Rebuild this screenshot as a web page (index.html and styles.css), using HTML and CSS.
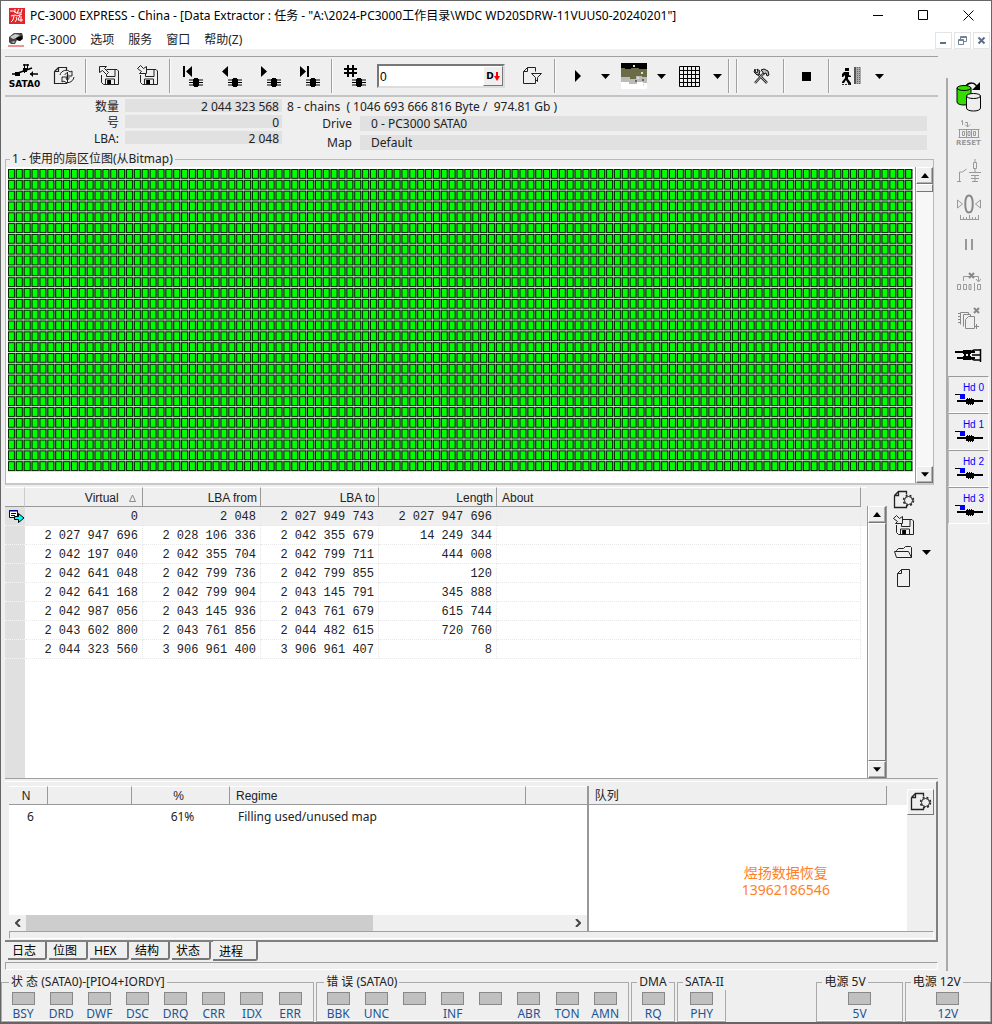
FILE: index.html
```html
<!DOCTYPE html>
<html lang="zh-CN">
<head>
    <meta charset="UTF-8">
    <meta name="viewport" content="width=device-width, initial-scale=1.0">
    <title>PC-3000 EXPRESS</title>
    <link rel="stylesheet" href="styles.css">
</head>
<body>
    <!-- shared icons -->
    <svg class="defs" width="0" height="0" aria-hidden="true">
        <symbol id="down" viewBox="0 0 9 5"><path d="M0 0h9L4.500 5z"/></symbol>
        <symbol id="up" viewBox="0 0 8 5"><path d="M0 5h8L4 0z"/></symbol>
        <symbol id="chip" viewBox="0 0 14 9">
            <path d="M0 2h14M0 4.500h14M0 7h14" stroke="#000" stroke-width="1"/>
            <path d="M4 1h6v7H4z"/><path d="M5 0h4v9H5z"/>
        </symbol>
        <symbol id="disk" viewBox="0 0 22 22">
            <path d="M8.500 4.500h10.500l1.500 1.500v13.500H5.500l-2-2V10M8.500 5v6.500h8.500V5M7.500 19v-5h9v5M9.500 15v4" fill="none" stroke="#222"/>
            <path d="M10 15h3v4h-3z"/>
        </symbol>
        <symbol id="saveout" viewBox="0 0 22 22">
            <use href="#disk"/>
            <path d="M1.500 1.500h7L6.500 3.500l4 4-2 2-4-4-3 2z" fill="#eee" stroke="#222"/>
        </symbol>
        <symbol id="savein" viewBox="0 0 22 22">
            <use href="#disk"/>
            <path d="M.500 3.500l3-3 3 3 3-2v7h-7l2-2-4-3z" fill="#eee" stroke="#222"/>
        </symbol>
        <symbol id="newpage" viewBox="0 0 22 20">
            <path d="M1.500 5.500l4-4h8v3M1.500 5.500h4v-4M1.500 5.500v12h12v-2" fill="none" stroke="#222" stroke-width="1.300"/>
            <circle cx="15.500" cy="10.500" r="4" fill="#eee" stroke="#222"/>
            <circle cx="15.500" cy="10.500" r="5" fill="none" stroke="#222" stroke-width="1.500" stroke-dasharray="2 2"/>
        </symbol>
        <symbol id="head" viewBox="0 0 28 14">
            <path d="M0 1.500h5" fill="none" stroke="#000"/>
            <path d="M5 1h5v5H5z" fill="#00f"/>
            <path d="M2 8h26" stroke="#000" stroke-width="2"/>
            <path d="M11 6h1V5h1v1h1V5h1v1h1V5h1v1h2v5h-1v1h-1v-1h-1v1h-1v-1h-1v1h-1v-1h-2z"/>
        </symbol>
    </svg>

    <div class="window">
        <header class="titlebar">
            <svg class="app-logo" viewBox="0 0 16 16">
                <path d="M0 0h16v16H0z" fill="#e1252b"/>
                <path d="M1 3h4l2 2h2M6 1v4M10 1l-2 4h4l1-4M2 8l4-1 2 1 5-2M5 8l-1 4-2 2M7 9l1 2-2 3M11 7l-2 5h5M12 8v6" fill="none" stroke="#fff"/>
            </svg>
            <h1>PC-3000 EXPRESS - China - [Data Extractor : 任务 - "A:\2024-PC3000工作目录\WDC WD20SDRW-11VUUS0-20240201"]</h1>
            <div class="window-buttons">
                <button aria-label="Minimize"><svg width="11" height="11" viewBox="0 0 11 11"><path d="M0 5.500h10" stroke="#000"/></svg></button>
                <button aria-label="Maximize"><svg width="11" height="11" viewBox="0 0 11 11"><path d="M.5.500h9v9h-9z" fill="none" stroke="#000"/></svg></button>
                <button aria-label="Close"><svg width="11" height="11" viewBox="0 0 11 11"><path d="M.5.500l10 10M10.500.500l-10 10" stroke="#000"/></svg></button>
            </div>
        </header>

        <nav class="menubar">
            <svg class="menu-logo" viewBox="0 0 16 14">
                <path d="M1 4l5-4h8l1 3v3l-3 2-3-1-2 4H3L1 9z" fill="#444"/>
                <path d="M2 4l5-3 5 1-4 3-3 1zM3 9l4-1-1 2z" fill="#ccc"/>
                <path d="M8 5l6-2v3l-2 2-3-1z" fill="#000"/>
                <path d="M0 13h16" stroke="#e1252b" stroke-width="1"/>
            </svg>
            <a href="#">PC-3000</a>
            <a href="#">选项</a>
            <a href="#">服务</a>
            <a href="#">窗口</a>
            <a href="#">帮助(Z)</a>
            <div class="mdi-buttons">
                <button aria-label="Minimize task"><svg width="9" height="9" viewBox="0 0 9 9"><path d="M1 7h6" stroke="#5b7085" stroke-width="2"/></svg></button>
                <button aria-label="Restore task"><svg width="9" height="9" viewBox="0 0 9 9"><path d="M2.500 3V.5h6v5H6M2.500 1.500h6M.5 3.500h5v5h-5zM.5 4.500h5" fill="none" stroke="#6f8296"/></svg></button>
                <button aria-label="Close task"><svg width="9" height="9" viewBox="0 0 9 9"><path d="M1.500 1.500l6 6M7.500 1.500l-6 6" stroke="#5b7085" stroke-width="2"/></svg></button>
            </div>
        </nav>

        <div class="work">
            <main class="main">
                <div class="toolbar">
                    <button aria-label="SATA0" class="port">
                        <svg width="26" height="13" viewBox="0 0 26 13"><path d="M0 10h7M18 10h8M6 9L20 4M11 1h6" stroke="#000" stroke-width="1.600" fill="none"/><path d="M12.500 0v9M15.500 0v6" stroke="#000"/><path d="M3 8h5v4H3zM18 10l3-3v6zM11 4h4v4h-4z"/></svg>
                        <span>SATA0</span>
                    </button>
                    <button aria-label="Refresh">
                        <svg width="22" height="20" viewBox="0 0 22 20"><path d="M1.500 5.500l4-4h8v3M1.500 5.500h4v-4M1.500 5.500v12h12v-1" fill="none" stroke="#222" stroke-width="1.200"/><path d="M7 9c1-5 8-6 10-3l2-1v5h-5l1-2c-2-2-3 0-3 1M21 11c-1 6-8 7-10 4l-2 1v-5h5l-1 2c2 2 3 0 3-2M14.500 6v11" fill="none" stroke="#222"/></svg>
                    </button>
                    <span class="sep"></span>
                    <button aria-label="Save"><svg width="22" height="22"><use href="#saveout"/></svg></button>
                    <button aria-label="Load"><svg width="22" height="22"><use href="#savein"/></svg></button>
                    <span class="sep"></span>
                    <button aria-label="First"><svg width="20" height="22" viewBox="0 0 20 22"><path d="M0 1h2v11H0zM9 1v11L3 6.500z"/><use href="#chip" x="6" y="13" width="14" height="9"/></svg></button>
                    <button aria-label="Previous"><svg width="20" height="22" viewBox="0 0 20 22"><path d="M6 1v11L0 6.500z"/><use href="#chip" x="6" y="13" width="14" height="9"/></svg></button>
                    <button aria-label="Next"><svg width="20" height="22" viewBox="0 0 20 22"><path d="M0 1v11l6-5.500z"/><use href="#chip" x="6" y="13" width="14" height="9"/></svg></button>
                    <button aria-label="Last"><svg width="20" height="22" viewBox="0 0 20 22"><path d="M0 1v11l6-5.500zM7 1h2v11H7z"/><use href="#chip" x="6" y="13" width="14" height="9"/></svg></button>
                    <span class="sep"></span>
                    <button aria-label="Go to number"><svg width="22" height="22" viewBox="0 0 22 22"><path d="M4 0v12M9 0v12M0 4h13M0 8h13" stroke="#000" stroke-width="2"/><use href="#chip" x="8" y="13" width="14" height="9"/></svg></button>
                    <div class="number-box">
                        <input type="text" value="0" aria-label="Sector">
                        <button aria-label="Decimal">D<svg width="6" height="9" viewBox="0 0 6 9"><path d="M2 0h2v4h2L3 9 0 4h2z" fill="red"/></svg></button>
                    </div>
                    <button class="filter" aria-label="Filter">
                        <svg width="21" height="20" viewBox="0 0 21 20"><path d="M1.500 5.500l4-4h8v4M1.500 5.500h4v-4M1.500 5.500v12h12v-5M9.500 7.500h10l-4 4v4l-2-2v-2z" fill="none" stroke="#222"/></svg>
                    </button>
                    <span class="sep"></span>
                    <button aria-label="Start"><svg width="6" height="12" viewBox="0 0 6 12"><path d="M0 0l6 6-6 6z"/></svg></button>
                    <button class="drop" aria-label="Start options"><svg width="9" height="5"><use href="#down"/></svg></button>
                    <button aria-label="Map view">
                        <svg width="26" height="26" viewBox="0 0 26 26"><path d="M0 0h26v26H0z" fill="#fff"/><path d="M0 0h26v6H0z"/><path d="M0 5h4v1h6v-1h8v1h8v8h-5v-1h-6v3H9v-2H0z" fill="#6b6b45"/><path d="M0 14h9v2h6v-3h6v1h5v6h-4v-1h-6v2H8v-2H0z" fill="#bbb"/><path d="M12 2h2v2h-2zM20 9h2v2h-2zM16 14h2v2h-2zM22 21h1v2h-1z" fill="#ddd"/><path d="M14 17h2v2h-2zM21 16h2v2h-2z" fill="#6b6b45"/></svg>
                    </button>
                    <button class="drop" aria-label="Map view options"><svg width="9" height="5"><use href="#down"/></svg></button>
                    <button aria-label="Grid"><svg width="21" height="21" viewBox="0 0 21 21"><path d="M.5.500h20v20H.500zM4.500 0v21M8.500 0v21M12.500 0v21M16.500 0v21M0 4.500h21M0 8.500h21M0 12.500h21M0 16.500h21" fill="none" stroke="#000"/></svg></button>
                    <button class="drop" aria-label="Grid options"><svg width="9" height="5"><use href="#down"/></svg></button>
                    <span class="sep"></span>
                    <span class="sep wide"></span>
                    <button aria-label="Settings"><svg width="17" height="16" viewBox="0 0 17 16"><path d="M2 15l9-10M5 6l9 9" stroke="#333" stroke-width="2.500"/><path d="M2 15l9-10M5 6l9 9" stroke="#aaa" stroke-width="1"/><path d="M8 2l3-1 4 2 1 4-2 1-1-3-2 1-2-3zM2 1L1 4l3 3 2-1 1-3-3-2 1 3-2 1z" fill="#bbb" stroke="#111"/></svg></button>
                    <span class="sep"></span>
                    <button aria-label="Stop"><svg width="9" height="9" viewBox="0 0 9 9"><path d="M0 0h9v9H0z"/></svg></button>
                    <span class="sep"></span>
                    <button aria-label="Exit"><svg width="20" height="18" viewBox="0 0 20 18"><path d="M3 1h4v3H3zM2 5h5v3l2 1v1H6v2l3 4v2H7l-3-5-2 3H0v-1l3-4V8L1 10H0V7z"/><path d="M0 17.500h9" stroke="#333" stroke-dasharray="2 1"/><path d="M12 0h7v17h-7z" fill="#aaa"/><path d="M12 0h2v17h-2z" fill="#555"/><path d="M15.500 0v17M17.500 0v17" stroke="#666" stroke-dasharray="1 1"/></svg></button>
                    <button class="drop" aria-label="Exit options"><svg width="9" height="5"><use href="#down"/></svg></button>
                </div>

                <section class="info">
                    <dl class="counts">
                        <dt>数量</dt><dd>2 044 323 568</dd>
                        <dt>号</dt><dd>0</dd>
                        <dt>LBA:</dt><dd>2 048</dd>
                    </dl>
                    <div class="task">
                        <p>8 - chains &nbsp;( 1046 693 666 816 Byte / &nbsp;974.81 Gb )</p>
                        <dl>
                            <dt>Drive</dt><dd>0 - PC3000 SATA0</dd>
                            <dt>Map</dt><dd>Default</dd>
                        </dl>
                    </div>
                </section>

                <fieldset class="bitmap">
                    <legend>1 - 使用的扇区位图(从Bitmap)</legend>
                    <div class="bitmap-body">
                        <!-- 115 x 28 sectors, 8 x 11 units each -->
                        <svg class="sectors" viewBox="0 0 920 308" preserveAspectRatio="none">
                            <defs>
                                <pattern id="sector" width="8" height="11" patternUnits="userSpaceOnUse">
                                    <path d="M0 0h8v11H0z" fill="#888"/>
                                    <path d="M0 0h7v10H0z" fill="#002a00"/>
                                    <path d="M1 1h5v8H1z" fill="#0f0"/>
                                    <path d="M0 10.500h8" stroke="#ddd"/>
                                </pattern>
                            </defs>
                            <path d="M0 0h920v308H0z" fill="url(#sector)"/>
                        </svg>
                        <div class="scrollbar">
                            <button aria-label="Scroll up"><svg width="8" height="5"><use href="#up"/></svg></button>
                            <span class="thumb small"></span>
                            <span class="track"></span>
                            <button aria-label="Scroll down"><svg width="8" height="5"><use href="#down"/></svg></button>
                        </div>
                    </div>
                </fieldset>

                <section class="chains">
                    <div class="chain-list">
                        <table>
                            <thead>
                                <tr>
                                    <th class="mark"></th>
                                    <th class="num">Virtual <svg class="sort" width="7" height="8" viewBox="0 0 7 8"><path d="M.500 7.500h6L3.500 1z" fill="none" stroke="#888"/></svg></th>
                                    <th class="num">LBA from</th>
                                    <th class="num">LBA to</th>
                                    <th class="num">Length</th>
                                    <th>About</th>
                                    <th class="rest"></th>
                                </tr>
                            </thead>
                            <tbody>
                                <tr class="current"><td class="mark"><svg width="16" height="13" viewBox="0 0 16 13"><path d="M.5.500h8v7h-8z" fill="#fff" stroke="#000080"/><path d="M0 1h9M2 3.500h5M2 5.500h4" stroke="#000080" stroke-width="1"/><path d="M5.500 6.500h4v-3L15 8l-5.500 4.500v-3h-4z" fill="#0ff" stroke="#000"/></svg></td><td>0</td><td>2 048</td><td>2 027 949 743</td><td>2 027 947 696</td><td></td><td class="rest"></td></tr>
                                <tr><td class="mark"></td><td>2 027 947 696</td><td>2 028 106 336</td><td>2 042 355 679</td><td>14 249 344</td><td></td><td class="rest"></td></tr>
                                <tr><td class="mark"></td><td>2 042 197 040</td><td>2 042 355 704</td><td>2 042 799 711</td><td>444 008</td><td></td><td class="rest"></td></tr>
                                <tr><td class="mark"></td><td>2 042 641 048</td><td>2 042 799 736</td><td>2 042 799 855</td><td>120</td><td></td><td class="rest"></td></tr>
                                <tr><td class="mark"></td><td>2 042 641 168</td><td>2 042 799 904</td><td>2 043 145 791</td><td>345 888</td><td></td><td class="rest"></td></tr>
                                <tr><td class="mark"></td><td>2 042 987 056</td><td>2 043 145 936</td><td>2 043 761 679</td><td>615 744</td><td></td><td class="rest"></td></tr>
                                <tr><td class="mark"></td><td>2 043 602 800</td><td>2 043 761 856</td><td>2 044 482 615</td><td>720 760</td><td></td><td class="rest"></td></tr>
                                <tr><td class="mark"></td><td>2 044 323 560</td><td>3 906 961 400</td><td>3 906 961 407</td><td>8</td><td></td><td class="rest"></td></tr>
                            </tbody>
                        </table>
                        <div class="mark-fill"></div>
                    </div>
                    <div class="scrollbar">
                        <button aria-label="Scroll up"><svg width="8" height="5"><use href="#up"/></svg></button>
                        <span class="thumb"></span>
                        <button aria-label="Scroll down"><svg width="8" height="5"><use href="#down"/></svg></button>
                    </div>
                    <div class="chain-tools">
                        <button aria-label="New chain"><svg width="22" height="20"><use href="#newpage"/></svg></button>
                        <button aria-label="Load chains"><svg width="22" height="22"><use href="#savein"/></svg></button>
                        <div class="pair">
                            <button aria-label="Open"><svg width="22" height="16" viewBox="0 0 22 16"><path d="M18.500 13.500h-15l-2-6h14l3 6V3.500l-1-1h-5l-2 2h-5l-2 2v1" fill="none" stroke="#222"/></svg></button>
                            <button class="drop" aria-label="Open options"><svg width="9" height="5"><use href="#down"/></svg></button>
                        </div>
                        <button aria-label="Clear"><svg width="22" height="20" viewBox="0 0 22 20"><path d="M4.500 5.500l4-4h8v17h-12zM4.500 5.500h4v-4" fill="none" stroke="#222"/></svg></button>
                    </div>
                </section>

                <section class="processes">
                    <div class="panes">
                        <div class="process-list">
                            <table>
                                <thead>
                                    <tr><th class="c-n">N</th><th class="c-blank"></th><th class="c-pct">%</th><th class="c-regime">Regime</th><th></th></tr>
                                </thead>
                                <tbody>
                                    <tr><td class="c-n">6</td><td></td><td class="c-pct">61%</td><td class="c-regime">Filling used/unused map</td><td></td></tr>
                                </tbody>
                            </table>
                            <div class="hscroll">
                                <button aria-label="Scroll left"><svg width="6" height="8" viewBox="0 0 6 8"><path d="M5 0L1 4l4 4" fill="none" stroke="#444" stroke-width="2"/></svg></button>
                                <span class="hthumb"></span>
                                <button aria-label="Scroll right"><svg width="6" height="8" viewBox="0 0 6 8"><path d="M1 0l4 4-4 4" fill="none" stroke="#444" stroke-width="2"/></svg></button>
                            </div>
                        </div>
                        <div class="queue">
                            <div class="queue-head"><h2>队列</h2></div>
                            <p class="contact">煜扬数据恢复<br>13962186546</p>
                        </div>
                        <div class="queue-tools">
                            <button aria-label="New process"><svg width="22" height="20"><use href="#newpage"/></svg></button>
                        </div>
                    </div>
                    <div class="groove"></div>
                </section>

                <nav class="tabs">
                    <button>日志</button>
                    <button>位图</button>
                    <button>HEX</button>
                    <button>结构</button>
                    <button>状态</button>
                    <button class="active">进程</button>
                </nav>
                <div class="groove message"></div>
            </main>

            <aside class="sidebar">
                <button aria-label="Copy drive"><svg width="26" height="30" viewBox="0 0 26 30"><path d="M10 4c3-4 9-4 11 1" fill="none" stroke="#000" stroke-width="1.500"/><path d="M24 0v8h-8z"/><path d="M1 6v14c0 4 14 4 14 0V6z" fill="#35dc00" stroke="#000"/><ellipse cx="8" cy="6" rx="7" ry="2.500" fill="#35dc00" stroke="#000"/><path d="M10.500 14v12c0 4 14 4 14 0V14z" fill="#eee" stroke="#000"/><ellipse cx="17.500" cy="14" rx="7" ry="2.500" fill="#eee" stroke="#000"/></svg></button>
                <button class="reset" aria-label="Reset">
                    <svg width="22" height="19" viewBox="0 0 22 19"><path d="M3 1.500l1.500-1V5M7 2.500h2.500V7M7 4.500L9.500 7 12 4.500" fill="none" stroke="#999"/><path d="M.5 9.500h21M.5 17.500h21M1.500 10v8M20.500 10v8M4.500 11.500h2v4h-2zM10 11.500h2v4h-2zM15.500 11.500h2v4h-2zM8.500 10v8M13.500 10v8" fill="none" stroke="#999"/></svg>
                    <span>RESET</span>
                </button>
                <button aria-label="Power"><svg width="24" height="24" viewBox="0 0 24 24"><path d="M0 22.500h4M2.500 22v-9h3l4-3M18 0v3M16.500 3.500h3v6h-3zM18 10v3M12 13.500h12M14 16.500h8M18 17v5M14 19.500h8M15 22.500h6" fill="none" stroke="#999"/></svg></button>
                <button aria-label="Recalibrate"><svg width="24" height="27" viewBox="0 0 24 27"><path d="M.5 6v8l5-4zM23.500 6v8l-5-4z" fill="none" stroke="#999"/><path d="M12 1.500c5 0 5 17 0 17s-5-17 0-17z" fill="none" stroke="#888" stroke-width="2"/><path d="M3 25.500h19M3.500 21v4M6.500 23v2M9.500 23v2M12.500 21v4M15.500 23v2M18.500 23v2M21.500 21v4" stroke="#999"/></svg></button>
                <button aria-label="Pause"><svg width="8" height="11" viewBox="0 0 8 11"><path d="M1 0v11M7 0v11" stroke="#999" stroke-width="2"/></svg></button>
                <button aria-label="Skip"><svg width="24" height="20" viewBox="0 0 24 20"><path d="M6.500 9V4.500h15V9M19 7l2.500 3L24 7M.5 12.500h3v5h-3zM6.500 12.500h3v5h-3zM12 12.500h2v5h-2zM17.500 11v8M20.500 12.500h3v5h-3z" fill="none" stroke="#999"/><path d="M12 1l5 5M17 1l-5 5" stroke="#888" stroke-width="2"/></svg></button>
                <button aria-label="Clear copies"><svg width="24" height="24" viewBox="0 0 24 24"><path d="M3.500 17.500v-12h8v2M6.500 19.500v-12h7v2M8.500 12.500l3-3h6v12h-9zM1 6.500h3M1 9.500h3M1 12.500h3M1 15.500h3M17 19.500h5M19.500 17v5" fill="none" stroke="#888"/><path d="M17 1l5 5M22 1l-5 5" stroke="#888" stroke-width="2"/></svg></button>
                <button aria-label="Heads"><svg width="27" height="13" viewBox="0 0 27 13"><path d="M0 3h20M2 9h18" stroke="#000" stroke-width="2"/><path d="M8 1h8v4H8zM9 5h2v3H9zM13 5h2v3h-2zM8 7h8v4H8z"/><path d="M15 3l4-2h7M15 9l4 2h7M25.500 0v13M17 6h9" stroke="#000" stroke-width="1.500" fill="none"/></svg></button>
                <div class="heads">
                    <button><span>Hd 0</span><svg width="28" height="14"><use href="#head"/></svg></button>
                    <button><span>Hd 1</span><svg width="28" height="14"><use href="#head"/></svg></button>
                    <button><span>Hd 2</span><svg width="28" height="14"><use href="#head"/></svg></button>
                    <button><span>Hd 3</span><svg width="28" height="14"><use href="#head"/></svg></button>
                </div>
            </aside>
        </div>

        <footer class="status">
            <fieldset class="leds eight">
                <legend>状 态 (SATA0)-[PIO4+IORDY]</legend>
                <span>BSY</span><span>DRD</span><span>DWF</span><span>DSC</span><span>DRQ</span><span>CRR</span><span>IDX</span><span>ERR</span>
            </fieldset>
            <fieldset class="leds eight">
                <legend>错 误 (SATA0)</legend>
                <span>BBK</span><span>UNC</span><span></span><span>INF</span><span></span><span>ABR</span><span>TON</span><span>AMN</span>
            </fieldset>
            <fieldset class="leds dma">
                <legend>DMA</legend>
                <span>RQ</span>
            </fieldset>
            <fieldset class="leds phy">
                <legend>SATA-II</legend>
                <span>PHY</span>
            </fieldset>
            <fieldset class="leds power first">
                <legend>电源 5V</legend>
                <span>5V</span>
            </fieldset>
            <fieldset class="leds power">
                <legend>电源 12V</legend>
                <span>12V</span>
            </fieldset>
        </footer>
    </div>
</body>
</html>
```
FILE: styles.css
```css
* {
    box-sizing: border-box;
}
body {
    margin: 0;
    background: #efefef;
    color: #222;
    font-family: "Noto Sans", "Noto Sans CJK SC", sans-serif;
    font-size: 12px;
    line-height: 16px;
}
button {
    padding: 0;
    border: 0;
    background: none;
    color: inherit;
    font: inherit;
}
svg {
    display: block;
}
h1, h2, p, dl, dd {
    margin: 0;
    font-size: 12px;
    font-weight: normal;
}
fieldset {
    min-width: 0;
    margin: 0;
    padding: 0;
    border: 0;
}
.defs {
    position: absolute;
}
.window {
    display: flex;
    flex-direction: column;
    min-height: 100vh;
    border: 1px solid #666;
    border-bottom-width: 2px;
}

/* title and menu */
.titlebar {
    display: flex;
    align-items: center;
    height: 29px;
    padding-left: 8px;
    background: #fff;
}
.app-logo {
    width: 16px;
    height: 16px;
    margin-right: 5px;
}
.titlebar h1 {
    flex: 1;
    color: #000;
    white-space: nowrap;
}
.window-buttons {
    display: flex;
}
.window-buttons button {
    display: flex;
    justify-content: center;
    width: 45px;
}
.menubar {
    display: flex;
    align-items: center;
    gap: 14px;
    height: 19px;
    padding: 1px 0 0 7px;
    background: #fff;
}
.menu-logo {
    width: 16px;
    height: 14px;
    margin-right: -8px;
}
.menubar a {
    color: #222;
    text-decoration: none;
}
.mdi-buttons {
    display: flex;
    gap: 2px;
    margin-left: auto;
    padding-right: 1px;
}
.mdi-buttons button {
    display: flex;
    align-items: center;
    justify-content: center;
    width: 17px;
    height: 17px;
    border: 1px solid #e4e4e4;
}

/* layout */
.work {
    display: flex;
    flex: 1;
}
.main {
    display: flex;
    flex: 1;
    flex-direction: column;
    min-width: 0;
    padding: 7px 8px 4px 4px;
}

/* toolbar */
.toolbar {
    display: flex;
    align-items: center;
    height: 41px;
    border-top: 1px solid #a0a0a0;
    border-bottom: 2px solid #c4c4c4;
}
.toolbar > button {
    display: flex;
    flex-direction: column;
    align-items: center;
    justify-content: center;
    width: 39px;
    height: 36px;
}
.toolbar > .drop {
    width: 17px;
}
.port span {
    padding-top: 3px;
    color: #000;
    font: bold 9px/9px "DejaVu Sans", sans-serif;
}
.sep {
    width: 2px;
    height: 34px;
    margin: 0 2px;
    border-left: 1px solid #a0a0a0;
    border-right: 1px solid #fafafa;
}
.sep.wide {
    margin: 0 4px;
}
.number-box {
    display: flex;
    width: 128px;
    height: 24px;
    margin-left: 3px;
    border: 2px solid;
    border-color: #777 #ddd #ddd #777;
    background: #fff;
}
.number-box input {
    flex: 1;
    min-width: 0;
    padding: 2px 1px 0;
    border: 0;
    font: 12px "Liberation Sans", sans-serif;
}
.number-box button {
    display: flex;
    align-items: center;
    justify-content: center;
    width: 20px;
    border: 1px solid;
    border-color: #fff #777 #777 #fff;
    background: #efefef;
    color: #000;
    font: bold 9px "DejaVu Sans", sans-serif;
}
.toolbar .filter {
    margin-left: 8px;
}

/* drive info */
.info {
    display: flex;
    padding: 2px 11px 0 0;
}
.counts {
    display: grid;
    grid-template-columns: 114px 157px;
    grid-auto-rows: 13px;
    gap: 3px 6px;
    line-height: 16px;
    text-align: right;
}
.counts dd {
    padding-right: 3px;
    background: #e1e1e1;
}
.task {
    flex: 1;
}
.task p {
    padding-left: 5px;
    white-space: nowrap;
}
.task dl {
    display: grid;
    grid-template-columns: 70px 1fr;
    grid-auto-rows: 15px;
    gap: 4px 8px;
    padding: 1px 0;
    line-height: 16px;
}
.task dt {
    text-align: right;
}
.task dd {
    padding-left: 11px;
    background: #e1e1e1;
}

/* sector map */
.bitmap {
    margin-right: 4px;
    border: 1px solid #b8b8b8;
    border-bottom: 2px solid #c8c8c8;
}
.bitmap legend {
    margin-left: 4px;
    padding: 0 2px;
    line-height: 16px;
}
.bitmap-body {
    display: flex;
    height: 316px;
    padding-left: 2px;
    background: #fff;
}
.sectors {
    flex: 1;
    min-width: 0;
    height: 303px;
    margin: 2px 2px 0 0;
}
.scrollbar {
    display: flex;
    flex-direction: column;
    width: 18px;
    border-left: 1px solid #999;
    background: #f7f7f7;
}
.scrollbar button {
    display: flex;
    align-items: center;
    justify-content: center;
    height: 17px;
    border: 1px solid;
    border-color: #fff #777 #777 #fff;
    background: #efefef;
    box-shadow: inset -1px -1px #b0b0b0;
}
.scrollbar .track {
    flex: 1;
}
.thumb {
    flex: 1;
    border: 1px solid;
    border-color: #fff #777 #777 #fff;
    background: #efefef;
}
.thumb.small {
    flex: none;
    height: 8px;
}

/* chain table */
.chains {
    display: flex;
    flex: 1;
    padding-top: 2px;
    border-bottom: 1px solid #a0a0a0;
}
.chain-list {
    display: flex;
    flex: 1;
    flex-direction: column;
    min-width: 0;
    background: #fff;
}
table {
    width: 100%;
    border-collapse: separate;
    border-spacing: 0;
    table-layout: fixed;
}
th, td {
    padding: 0;
    white-space: nowrap;
}
th {
    border-top: 1px solid #fff;
    border-right: 1px solid #999;
    border-bottom: 1px solid #999;
    background: #efefef;
    font: 12px "Liberation Sans", "Noto Sans CJK SC", sans-serif;
    text-align: left;
}
.chains th {
    height: 20px;
    padding: 1px 5px 0;
}
.chains .num {
    width: 118px;
    padding-right: 3px;
    text-align: right;
}
.chains .sort {
    display: inline-block;
    margin: 0 3px 0 7px;
}
.chains td {
    height: 19px;
    padding: 1px 4px 0 0;
    border-right: 1px dotted #e8e8e8;
    border-bottom: 1px dotted #e8e8e8;
    color: #222;
    font: 12px "Liberation Mono", monospace;
    text-align: right;
}
.chains .current td {
    background: #efefef;
}
.chains .mark {
    width: 20px;
    padding: 0;
    border-right-color: #ccc;
}
.chains td.mark {
    border-right: 0;
    border-bottom-color: #f5f5f5;
    background: #e0e0e0;
}
.mark svg {
    margin-left: 4px;
}
.chains .rest {
    width: 6px;
    padding: 0;
    border-right: 0;
    border-bottom-color: transparent;
}
.mark-fill {
    flex: 1;
    width: 20px;
    background: #e0e0e0;
}
.chains .scrollbar {
    width: 20px;
    margin-top: 19px;
    border-right: 1px solid #999;
}
.chain-tools {
    display: flex;
    flex-direction: column;
    gap: 6px;
    width: 51px;
    padding: 3px 0 0 6px;
}
.chain-tools button {
    display: flex;
    align-items: center;
    justify-content: center;
    width: 22px;
    height: 20px;
}
.pair {
    display: flex;
}

/* process panel */
.processes {
    margin-top: 2px;
    padding: 4px 2px 1px 4px;
    border: solid;
    border-width: 1px 2px 2px 0;
    border-color: #fff #808080 #808080 #fff;
}
.panes {
    display: flex;
    height: 145px;
}
.process-list {
    display: flex;
    flex: 579;
    flex-direction: column;
    background: #fff;
}
.processes th {
    height: 19px;
    padding-top: 1px;
}
.processes td {
    height: 24px;
}
.processes .c-n {
    width: 39px;
    padding-right: 4px;
    text-align: center;
}
.processes td.c-n {
    padding: 0 0 0 4px;
}
.c-blank {
    width: 84px;
}
.c-pct {
    width: 98px;
    padding-right: 4px;
    text-align: center;
}
.c-regime {
    width: 296px;
    padding-left: 6px;
}
td.c-pct {
    padding: 0 0 0 3px;
}
td.c-regime {
    padding-left: 8px;
}
.processes th:last-child {
    border-right: 0;
}
.hscroll {
    display: flex;
    justify-content: space-between;
    height: 16px;
    margin-top: auto;
    background: #efefef;
}
.hscroll button {
    display: flex;
    align-items: center;
    justify-content: center;
    width: 17px;
}
.hthumb {
    width: 60%;
    margin-right: auto;
    background: #cdcdcd;
}
.queue {
    flex: 319;
    border-left: 2px solid #999;
    background: #fff;
}
.queue-head {
    height: 19px;
    padding-right: 20px;
    background: #efefef;
}
.queue h2 {
    height: 19px;
    padding: 1px 0 0 6px;
    border-right: 1px solid #999;
    border-bottom: 1px solid #999;
    line-height: 18px;
}
.contact {
    padding: 59px 0 0 76px;
    color: #ff7f27;
    font-size: 14px;
    line-height: 17px;
    text-align: center;
}
.queue-tools {
    width: 27px;
    padding-top: 3px;
}
.queue-tools button {
    display: flex;
    align-items: center;
    justify-content: center;
    width: 27px;
    height: 26px;
    border: 1px solid;
    border-color: #fff #777 #777 #fff;
}
.groove {
    height: 8px;
    border: 1px solid;
    border-color: #a0a0a0 #fff #fff #a0a0a0;
}

/* tabs */
.tabs {
    display: flex;
    gap: 2px;
    height: 20px;
    padding-left: 3px;
}
.tabs button {
    width: 39px;
    height: 18px;
    padding: 1px 0 0 4px;
    border-right: 2px solid #777;
    border-bottom: 2px solid #777;
    border-bottom-right-radius: 3px;
    color: #000;
    line-height: 15px;
    text-align: left;
}
.tabs .active {
    width: 45px;
    height: 20px;
    margin-top: -1px;
    padding-left: 6px;
    background: #efefef;
    line-height: 19px;
}

/* right side tools */
.sidebar {
    width: 45px;
    margin: 29px 0 3px;
    border-left: 2px solid #aaa;
}
.sidebar button {
    display: flex;
    flex-direction: column;
    align-items: center;
    justify-content: center;
    width: 41px;
    height: 37px;
}
.reset span {
    color: #999;
    font: bold 7px/8px "DejaVu Sans", sans-serif;
}
.heads {
    padding-top: 2px;
}
.sidebar .heads button {
    border: 1px solid;
    border-color: #999 #fff #fff #bbb;
}
.heads span {
    align-self: flex-end;
    padding-right: 4px;
    color: #00f;
    font: 10px/11px "Liberation Sans", sans-serif;
}

/* status lights */
.status {
    display: flex;
    gap: 2px;
    height: 48px;
}
.leds {
    display: flex;
    flex: none;
    border: 1px solid #aaa;
    box-shadow: inset 0 -1px #fff;
}
.leds legend {
    height: 16px;
    margin-left: 5px;
    padding: 0 2px;
    white-space: nowrap;
}
.leds span {
    flex: 1;
    color: #1c5592;
    line-height: 15px;
    text-align: center;
}
.leds span::before {
    content: "";
    display: block;
    width: 21px;
    height: 11px;
    margin: 2px auto 1px;
    border: 1px solid #888;
    background: #c0c0c0;
}
.eight {
    flex: 315;
    padding: 0 4px 0 2px;
}
.dma {
    flex: 43;
}
.phy {
    flex: 49;
}
.power {
    flex: 87;
}
.power.first {
    margin-left: 88px;
}
```
